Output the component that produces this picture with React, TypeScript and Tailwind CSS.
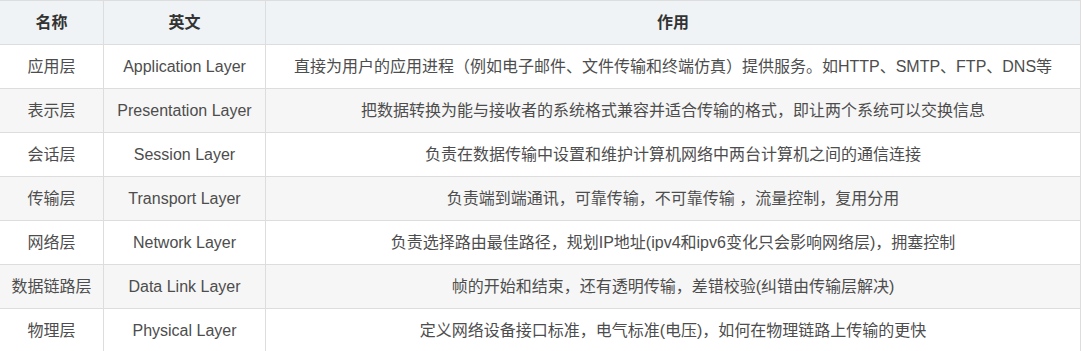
const rows = [
  { name: '应用层', en: 'Application Layer', desc: '直接为用户的应用进程（例如电子邮件、文件传输和终端仿真）提供服务。如HTTP、SMTP、FTP、DNS等' },
  { name: '表示层', en: 'Presentation Layer', desc: '把数据转换为能与接收者的系统格式兼容并适合传输的格式，即让两个系统可以交换信息' },
  { name: '会话层', en: 'Session Layer', desc: '负责在数据传输中设置和维护计算机网络中两台计算机之间的通信连接' },
  { name: '传输层', en: 'Transport Layer', desc: '负责端到端通讯，可靠传输，不可靠传输 ，流量控制，复用分用' },
  { name: '网络层', en: 'Network Layer', desc: '负责选择路由最佳路径，规划IP地址(ipv4和ipv6变化只会影响网络层)，拥塞控制' },
  { name: '数据链路层', en: 'Data Link Layer', desc: '帧的开始和结束，还有透明传输，差错校验(纠错由传输层解决)' },
  { name: '物理层', en: 'Physical Layer', desc: '定义网络设备接口标准，电气标准(电压)，如何在物理链路上传输的更快' },
];

export default function App() {
  return (
    <div className="w-[1082px] h-[351px] overflow-hidden bg-white font-['Liberation_Sans','Noto_Sans_CJK_SC',sans-serif] text-[16px]">
      <table className="-ml-px w-[1082px] border-collapse table-fixed">
        <colgroup>
          <col className="w-[104px]" />
          <col className="w-[162px]" />
          <col />
        </colgroup>
        <thead>
          <tr className="h-[44px] bg-[#eff3f5]">
            <th className="border border-[#dddddd] font-bold text-[#333333] text-center">名称</th>
            <th className="border border-[#dddddd] font-bold text-[#333333] text-center">英文</th>
            <th className="border border-[#dddddd] font-bold text-[#333333] text-center">作用</th>
          </tr>
        </thead>
        <tbody>
          {rows.map((r, i) => (
            <tr key={r.name} className={`h-[44px] ${i % 2 === 1 ? 'bg-[#f6f6f6]' : 'bg-white'}`}>
              <td className="border border-[#dddddd] text-center text-[#4d4d4d] whitespace-nowrap">{r.name}</td>
              <td className="border border-[#dddddd] text-center text-[#4d4d4d] whitespace-nowrap">{r.en}</td>
              <td className="border border-[#dddddd] text-center text-[#4d4d4d] whitespace-nowrap">{r.desc}</td>
            </tr>
          ))}
        </tbody>
      </table>
    </div>
  );
}
